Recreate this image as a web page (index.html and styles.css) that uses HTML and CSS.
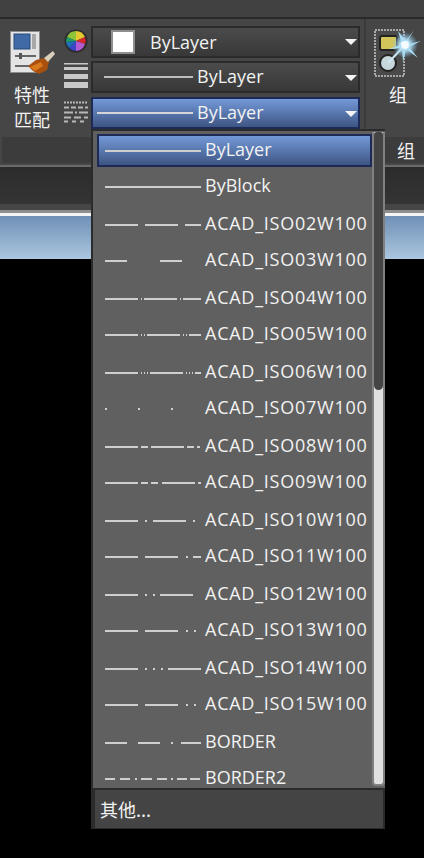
FILE: index.html
```html
<!DOCTYPE html>
<html lang="en">
<head>
    <meta charset="UTF-8">
    <meta name="viewport" content="width=device-width, initial-scale=1.0">
    <title>Properties panel</title>
    <link rel="stylesheet" href="styles.css">
</head>
<body>
    <div class="app">
        <div class="top-strip"></div>
        <div class="ribbon">
            <div class="match-button">
                <svg class="match-icon" width="48" height="48" viewBox="0 0 48 48">
                    <rect x="0.5" y="1.5" width="29" height="41" fill="#e4e4e4" stroke="#8c8c8c"/>
                    <rect x="4" y="4" width="16" height="15" fill="#3f6aa5" stroke="#274a7c"/>
                    <rect x="22" y="4" width="4" height="15" fill="#a8a8a8"/>
                    <path d="M5 26h21M5 36h16" stroke="#666" stroke-width="2"/>
                    <rect x="9" y="23" width="3" height="6" fill="#555"/>
                    <path d="M18 36l8-6 8-2 5 4-2 8-8 4-6-3z" fill="#a9500f"/>
                    <path d="M34 28l9-7 2 3-7 8z" fill="#d8d0bc"/>
                    <path d="M20 37l11-5 2 4-8 5z" fill="#d9791e"/>
                </svg>
                <div class="match-label">特性<br>匹配</div>
            </div>
            <div class="prop-icons">
                <svg width="24" height="24" viewBox="0 0 24 24">
                    <circle cx="12" cy="12" r="11.5" fill="#2a2a2a"/>
                    <path d="M12 12L3 8A10 10 0 0 1 12 2z" fill="#8fc43a"/>
                    <path d="M12 12V2a10 10 0 0 1 9 6z" fill="#e3c832"/>
                    <path d="M12 12l9-4a10 10 0 0 1 0 7z" fill="#d8262c"/>
                    <path d="M12 12l9 3a10 10 0 0 1-9 7z" fill="#b45ad0"/>
                    <path d="M12 12v10a10 10 0 0 1-7-3z" fill="#3a45c8"/>
                    <path d="M12 12l-7 7a10 10 0 0 1-3-6z" fill="#1f6fb6"/>
                    <path d="M12 12L2 13a10 10 0 0 1 1-5z" fill="#1f9b6a"/>
                </svg>
                <svg width="24" height="25" viewBox="0 0 24 25">
                    <rect y="0" width="24" height="1.5" fill="#c8c8c8"/>
                    <rect y="4" width="24" height="3" fill="#c8c8c8"/>
                    <rect y="11" width="24" height="5" fill="#c8c8c8"/>
                    <rect y="19" width="24" height="6" fill="#c8c8c8"/>
                </svg>
                <svg class="linetype-icon" width="24" height="22" viewBox="0 0 24 22">
                    <g fill="none" stroke="#b8b8b8">
                        <path d="M0 1.5h24" stroke-width="2" stroke-dasharray="2 1"/>
                        <path d="M0 6.5h24" stroke-width="2" stroke-dasharray="5 2"/>
                        <path d="M0 11.5h24" stroke-width="2" stroke-dasharray="9 2 2 2"/>
                        <path d="M0 16.5h24" stroke-width="2" stroke-dasharray="7 3"/>
                        <path d="M0 20.5h24" stroke-width="2" stroke-dasharray="4 4"/>
                    </g>
                </svg>
            </div>
            <div class="combos">
                <div class="combo combo-color">
                    <span class="swatch"></span>
                    <span class="combo-text">ByLayer</span>
                    <span class="caret"></span>
                </div>
                <div class="combo combo-line">
                    <span class="combo-rule"></span>
                    <span class="combo-text">ByLayer</span>
                    <span class="caret"></span>
                </div>
                <div class="combo combo-line combo-active">
                    <span class="combo-rule"></span>
                    <span class="combo-text">ByLayer</span>
                    <span class="caret"></span>
                </div>
            </div>
            <div class="group-button">
                <svg width="48" height="48" viewBox="0 0 48 48">
                    <defs>
                        <radialGradient id="glow">
                            <stop offset="0" stop-color="#f4fcff"/>
                            <stop offset="0.35" stop-color="#bfe6fa"/>
                            <stop offset="1" stop-color="#7fc4ea" stop-opacity="0"/>
                        </radialGradient>
                    </defs>
                    <rect x="1" y="1" width="29" height="46" fill="#4a4a4a" stroke="#a8a8a8" stroke-width="2" stroke-dasharray="2 1"/>
                    <rect x="6" y="7" width="17" height="14" rx="2" fill="#d2c65a" stroke="#222" stroke-width="2"/>
                    <circle cx="14" cy="34" r="8" fill="#c6d6da" stroke="#222" stroke-width="2"/>
                    <path d="M14 34L31 16" stroke="#cfe8f5" stroke-width="2"/>
                    <circle cx="31" cy="16" r="13" fill="url(#glow)"/>
                    <path d="M31 16L47 12 35 18 44 29 32 20 29 33 28 19 15 20 28 15 24 2 32 12 40 1z" fill="#a9dcf5"/>
                    <circle cx="31" cy="16" r="4" fill="#f4fcff"/>
                </svg>
                <div class="group-label">组</div>
            </div>
        </div>
        <div class="panel-title">
            <span class="panel-name">组</span>
        </div>
        <div class="doc-bar"></div>
        <div class="view-edge"></div>
        <div class="view-sky"></div>

        <div class="dropdown">
            <div class="dropdown-body">
                <ul class="line-list">
                    <li class="line-row selected">
                        <svg class="sample" width="96" height="2"><path d="M0 1h96"/></svg>
                        <span>ByLayer</span>
                    </li>
                    <li class="line-row">
                        <svg class="sample" width="96" height="2"><path d="M0 1h96"/></svg>
                        <span>ByBlock</span>
                    </li>
                    <li class="line-row">
                        <svg class="sample" width="96" height="2"><path d="M0 1h33M40 1h33M80 1h16"/></svg>
                        <span class="wide">ACAD_ISO02W100</span>
                    </li>
                    <li class="line-row">
                        <svg class="sample" width="96" height="2"><path d="M0 1h22M55 1h22"/></svg>
                        <span class="wide">ACAD_ISO03W100</span>
                    </li>
                    <li class="line-row">
                        <svg class="sample" width="96" height="2"><path d="M0 1h33M36 1h1M39 1h33M75 1h1M78 1h18"/></svg>
                        <span class="wide">ACAD_ISO04W100</span>
                    </li>
                    <li class="line-row">
                        <svg class="sample" width="96" height="2"><path d="M0 1h33M36 1h1M39 1h1M42 1h33M78 1h1M81 1h1M84 1h12"/></svg>
                        <span class="wide">ACAD_ISO05W100</span>
                    </li>
                    <li class="line-row">
                        <svg class="sample" width="96" height="2"><path d="M0 1h33M36 1h1M39 1h1M42 1h1M45 1h33M81 1h1M84 1h1M87 1h1M90 1h6"/></svg>
                        <span class="wide">ACAD_ISO06W100</span>
                    </li>
                    <li class="line-row">
                        <svg class="sample" width="96" height="2"><path d="M0 1h2M33 1h2M66 1h2"/></svg>
                        <span class="wide">ACAD_ISO07W100</span>
                    </li>
                    <li class="line-row">
                        <svg class="sample" width="96" height="2"><path d="M0 1h33M36 1h7M46 1h33M82 1h7M92 1h3"/></svg>
                        <span class="wide">ACAD_ISO08W100</span>
                    </li>
                    <li class="line-row">
                        <svg class="sample" width="96" height="2"><path d="M0 1h33M36 1h7M46 1h7M57 1h33M93 1h3"/></svg>
                        <span class="wide">ACAD_ISO09W100</span>
                    </li>
                    <li class="line-row">
                        <svg class="sample" width="96" height="2"><path d="M0 1h33M40 1h2M48 1h33M88 1h2"/></svg>
                        <span class="wide">ACAD_ISO10W100</span>
                    </li>
                    <li class="line-row">
                        <svg class="sample" width="96" height="2"><path d="M0 1h33M40 1h33M81 1h2M88 1h8"/></svg>
                        <span class="wide">ACAD_ISO11W100</span>
                    </li>
                    <li class="line-row">
                        <svg class="sample" width="96" height="2"><path d="M0 1h33M40 1h2M48 1h2M55 1h33"/></svg>
                        <span class="wide">ACAD_ISO12W100</span>
                    </li>
                    <li class="line-row">
                        <svg class="sample" width="96" height="2"><path d="M0 1h33M40 1h33M81 1h2M89 1h2"/></svg>
                        <span class="wide">ACAD_ISO13W100</span>
                    </li>
                    <li class="line-row">
                        <svg class="sample" width="96" height="2"><path d="M0 1h33M40 1h2M48 1h2M56 1h2M63 1h33"/></svg>
                        <span class="wide">ACAD_ISO14W100</span>
                    </li>
                    <li class="line-row">
                        <svg class="sample" width="96" height="2"><path d="M0 1h33M40 1h33M81 1h2M89 1h2"/></svg>
                        <span class="wide">ACAD_ISO15W100</span>
                    </li>
                    <li class="line-row">
                        <svg class="sample" width="96" height="2"><path d="M0 1h22M33 1h22M66 1h2M76 1h20"/></svg>
                        <span>BORDER</span>
                    </li>
                    <li class="line-row">
                        <svg class="sample" width="96" height="2"><path d="M0 1h10M15 1h10M30 1h2M36 1h11M52 1h10M66 1h2M72 1h10M85 1h10"/></svg>
                        <span>BORDER2</span>
                    </li>
                </ul>
                <div class="scrollbar">
                    <div class="scroll-thumb"></div>
                </div>
            </div>
            <div class="dropdown-footer">其他...</div>
        </div>
    </div>
</body>
</html>
```

FILE: styles.css
```css
* {
    box-sizing: border-box;
}
body {
    margin: 0;
    background-color: #000;
    color: #f2f2f2;
    font-family: "Open Sans", "Noto Sans CJK SC", sans-serif;
}
.app {
    position: relative;
    width: 424px;
    height: 858px;
    overflow: hidden;
    background-color: #000;
}
.top-strip {
    height: 19px;
    background-color: #414141;
    border-bottom: 2px solid #2a2a2a;
}
.ribbon {
    display: flex;
    height: 118px;
    background-color: #464646;
}
.match-button {
    width: 64px;
    padding: 11px 0 0 10px;
}
.match-icon {
    display: block;
}
.match-label {
    margin: 4px 0 0 4px;
    font-family: "Noto Sans CJK SC", sans-serif;
    font-size: 18px;
    line-height: 25px;
}
.prop-icons {
    display: flex;
    flex-direction: column;
    width: 27px;
    padding-top: 10px;
    gap: 10px;
}
.prop-icons svg {
    display: block;
}
.prop-icons .linetype-icon {
    margin-top: 3px;
}
.combos {
    display: flex;
    flex-direction: column;
    width: 269px;
    padding-top: 7px;
    gap: 3px;
}
.combo {
    display: flex;
    align-items: center;
    position: relative;
    height: 32px;
    border: 2px solid #2b2b2b;
    background: linear-gradient(#4b4b4b, #383838);
    font-size: 18px;
}
.combo-color {
    padding-left: 18px;
}
.swatch {
    width: 24px;
    height: 24px;
    margin-right: 15px;
    background-color: #fff;
    border: 2px solid #8e8e8e;
}
.combo-line {
    padding-left: 11px;
}
.combo-rule {
    width: 89px;
    height: 2px;
    margin-right: 4px;
    background-color: #bdbdbd;
}
.combo-active {
    margin-top: 1px;
    padding-left: 0;
    border-color: #1d2a55;
    background: linear-gradient(#7499d8, #3d5583);
}
.combo-active .combo-rule {
    width: 96px;
    margin-left: 4px;
    background-color: #d5d5d5;
}
.combo-text {
    line-height: 20px;
}
.combo-line .combo-text {
    margin-bottom: 2px;
}
.caret {
    position: absolute;
    right: 1px;
    top: 11px;
    width: 0;
    height: 0;
    border-left: 6px solid transparent;
    border-right: 6px solid transparent;
    border-top: 6px solid #f4f4f4;
}
.combo-line .caret {
    top: 12px;
}
.group-button {
    flex: 1;
    margin-left: 4px;
    padding: 10px 0 0 8px;
    border-left: 2px solid #3a3a3a;
}
.group-button svg {
    display: block;
}
.group-label {
    margin: 5px 0 0 15px;
    font-family: "Noto Sans CJK SC", sans-serif;
    font-size: 18px;
    line-height: 24px;
}
.panel-title {
    display: flex;
    justify-content: flex-end;
    align-items: center;
    height: 30px;
    padding: 0 9px 3px 2px;
    background: linear-gradient(#3c3c3c, #3c3c3c) 2px 0 / 100% 26px no-repeat;
    background-color: #464646;
    border-bottom: 2px solid #6a6a6a;
}
.panel-name {
    font-family: "Noto Sans CJK SC", sans-serif;
    font-size: 18px;
}
.doc-bar {
    height: 37px;
    background: linear-gradient(#2c2c2c, #343434);
}
.view-edge {
    height: 12px;
    background: linear-gradient(#464646 0 6px, #8e8e8e 6px 9px, #f4f4f4 9px);
}
.view-sky {
    height: 43px;
    background: linear-gradient(#6f90b6, #abc6df);
}

/* linetype list that hangs over the canvas */
.dropdown {
    position: absolute;
    left: 91px;
    top: 129px;
    width: 294px;
    height: 700px;
    display: flex;
    flex-direction: column;
    background-color: #2b2b2b;
    padding: 2px 0 1px 2px;
}
.dropdown-body {
    display: flex;
    flex: 1;
    min-height: 0;
    background-color: #606060;
}
.line-list {
    flex: 1;
    list-style: none;
    margin: 0;
    padding: 3px 0 0 4px;
    overflow: hidden;
}
.line-row {
    display: flex;
    align-items: center;
    height: 33px;
    padding-left: 6px;
    border: 2px solid transparent;
    font-size: 18px;
}
.line-row span {
    margin-bottom: 3px;
}
.line-row .wide {
    letter-spacing: 0.75px;
}
.line-row:nth-child(odd) {
    margin-bottom: 3px;
}
.line-row:nth-child(even) {
    margin-bottom: 5px;
}
.line-row.selected {
    border-color: #1d2a55;
    background: linear-gradient(#7499d8, #3d5583);
}
.sample {
    flex: none;
    margin-right: 4px;
}
.sample path {
    fill: none;
    stroke: #cfcfcf;
    stroke-width: 2;
}
.scrollbar {
    width: 13px;
    background-color: #e0e0e0;
    border-left: 2px solid #808080;
    border-right: 2px solid #808080;
    border-bottom: 2px solid #808080;
    border-radius: 0 0 4px 4px;
    margin: 1px 0 2px 0;
}
.scroll-thumb {
    height: 258px;
    background-color: #454545;
    border-radius: 3px 3px 5px 5px;
}
.dropdown-footer {
    flex: none;
    height: 38px;
    margin-top: 2px;
    width: 290px;
    padding-left: 5px;
    border-left: 2px solid #2b2b2b;
    background-color: #444;
    font-family: "Noto Sans CJK SC", sans-serif;
    font-size: 18px;
    line-height: 38px;
}
```
